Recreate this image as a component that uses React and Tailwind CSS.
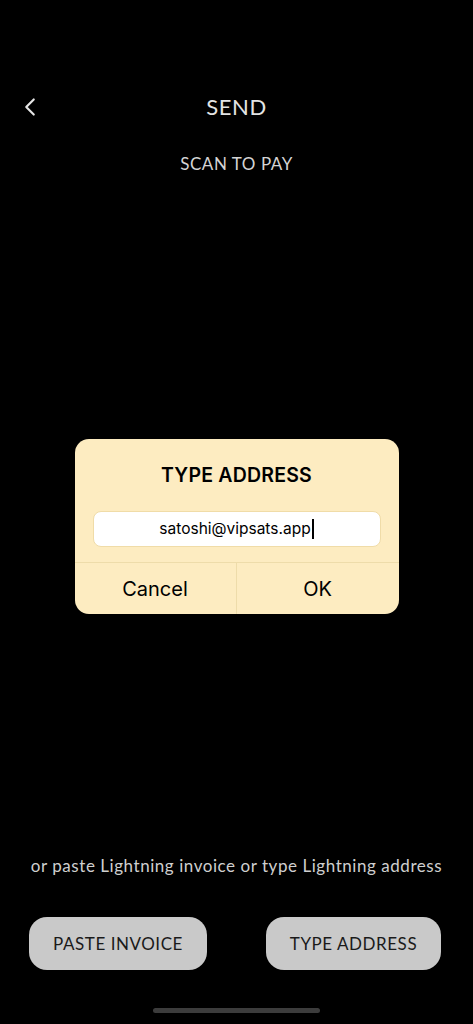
import { ChevronLeft } from "lucide-react";

const avenir = { fontFamily: "Lato, 'Noto Sans', sans-serif" };

function AddressDialog() {
  return (
    <div className="mx-auto mt-[265px] w-[324px] rounded-[14px] bg-[#fdecc1] font-['Inter',sans-serif] tracking-normal text-black">
      <h2 className="pt-[24px] text-center text-[19.5px] font-semibold leading-[24px] tracking-[0.2px]">TYPE ADDRESS</h2>
      <div className="mx-[18px] mt-[24px] flex h-[36px] items-center justify-center rounded-[8px] border border-[#f0dca8] bg-white text-[15.5px]">
        <span>satoshi@vipsats.app</span>
        <span className="ml-px h-[20px] w-[2px] bg-black" />
      </div>
      <div className="mt-[15px] grid h-[52px] grid-cols-2 border-t border-[#eedcaa] text-[20px]">
        <button className="border-r border-[#eedcaa]">Cancel</button>
        <button>OK</button>
      </div>
    </div>
  );
}

export default function App() {
  return (
    <div className="h-[1024px] w-full overflow-hidden bg-black tracking-[0.55px]" style={avenir}>
      <div className="mt-[92px] grid h-[28px] grid-cols-[1fr_auto_1fr] items-center">
        <ChevronLeft className="ml-[15px] h-[30px] w-[30px] text-[#e6e6e6]" strokeWidth={1.7} />
        <h1 className="text-[22px] leading-[28px] text-[#e4e4e4]">SEND</h1>
        <span />
      </div>
      <p className="mt-[34px] text-center text-[17px] leading-[20px] text-[#d4d4d4]">SCAN TO PAY</p>

      <AddressDialog />

      <p className="mt-[242px] text-center text-[17px] leading-[20px] text-[#cfcfcf]">
        or paste Lightning invoice or type Lightning address
      </p>

      <div className="mt-[41px] flex justify-between pl-[29px] pr-[32px]">
        <button className="h-[53px] w-[178px] rounded-[18px] bg-[#c9c9c9] text-[17px] text-[#1a1a1a]">PASTE INVOICE</button>
        <button className="h-[53px] w-[175px] rounded-[18px] bg-[#c9c9c9] text-[17px] text-[#1a1a1a]">TYPE ADDRESS</button>
      </div>

      <div className="mx-auto mt-[38px] h-[5px] w-[167px] rounded-full bg-[#3c3c3c]" />
    </div>
  );
}
